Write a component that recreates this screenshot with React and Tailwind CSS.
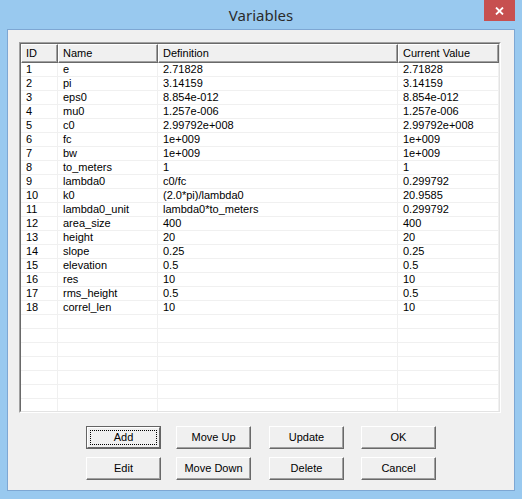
import React from "react";

const rows = [
  ["1", "e", "2.71828", "2.71828"],
  ["2", "pi", "3.14159", "3.14159"],
  ["3", "eps0", "8.854e-012", "8.854e-012"],
  ["4", "mu0", "1.257e-006", "1.257e-006"],
  ["5", "c0", "2.99792e+008", "2.99792e+008"],
  ["6", "fc", "1e+009", "1e+009"],
  ["7", "bw", "1e+009", "1e+009"],
  ["8", "to_meters", "1", "1"],
  ["9", "lambda0", "c0/fc", "0.299792"],
  ["10", "k0", "(2.0*pi)/lambda0", "20.9585"],
  ["11", "lambda0_unit", "lambda0*to_meters", "0.299792"],
  ["12", "area_size", "400", "400"],
  ["13", "height", "20", "20"],
  ["14", "slope", "0.25", "0.25"],
  ["15", "elevation", "0.5", "0.5"],
  ["16", "res", "10", "10"],
  ["17", "rms_height", "0.5", "0.5"],
  ["18", "correl_len", "10", "10"],
];

const filler = Array.from({ length: 7 }, () => ["", "", "", ""]);

const colW = ["w-[37px]", "w-[100px]", "w-[240px]", "w-[101px]"];
const heads = ["ID", "Name", "Definition", "Current Value"];

function Btn({ label, isDefault, className = "" }) {
  if (isDefault) {
    return (
      <div className={`w-[75px] h-[23px] border border-[#646464] ${className}`}>
        <div className="w-full h-full border-t border-l border-white border-r border-b border-r-[#696969] border-b-[#696969] bg-[#f0f0f0] p-[2px]">
          <div className="w-full h-full border border-dotted border-black flex items-center justify-center text-[11px] text-black leading-none">
            {label}
          </div>
        </div>
      </div>
    );
  }
  return (
    <div className={`w-[75px] h-[23px] border-t border-l border-white border-r border-b border-r-[#696969] border-b-[#696969] bg-[#f0f0f0] shadow-[inset_-1px_-1px_0_#a0a0a0] flex items-center justify-center text-[11px] text-black leading-none ${className}`}>
      {label}
    </div>
  );
}

export default function App() {
  return (
    <div
      className="w-[522px] h-[499px] bg-[#99c9ef] flex flex-col overflow-hidden"
      style={{ fontFamily: '"Liberation Sans", Arial, sans-serif' }}
    >
      {/* title bar */}
      <div className="relative h-[29px] shrink-0 flex items-center justify-center">
        <span
          className="text-[15px] text-[#2b2b2b] pt-[1px]"
          style={{ fontFamily: '"Noto Sans", "Open Sans", sans-serif' }}
        >
          Variables
        </span>
        <div className="absolute right-[7px] top-0 w-[31px] h-[21px] bg-[#c75050] flex items-center justify-center">
          <svg width="9" height="8" viewBox="0 0 9 8">
            <path d="M1 0.5 L8 7.5 M8 0.5 L1 7.5" stroke="#fff" strokeWidth="1.8" />
          </svg>
        </div>
      </div>

      {/* client area */}
      <div className="mx-[7px] h-[462px] border border-[#7ea7d3] bg-[#f0f0f0] flex flex-col">
        {/* list view */}
        <div className="ml-[11px] mt-[12px] w-[482px] h-[371px] border-t border-l border-[#a0a0a0] border-r border-b border-r-white border-b-white">
          <div className="w-full h-full border-t border-l border-[#696969] border-r border-b border-r-[#e3e3e3] border-b-[#e3e3e3] bg-white overflow-hidden">
            <div className="flex h-[19px] bg-[#f0f0f0]">
              {heads.map((h, i) => (
                <div
                  key={h}
                  className={`${colW[i]} h-full border-t border-l border-white border-r border-b border-r-[#696969] border-b-[#696969] shadow-[inset_-1px_-1px_0_#a0a0a0] pl-[4px] flex items-center text-[11px] text-black leading-none`}
                >
                  {h}
                </div>
              ))}
            </div>
            {[...rows, ...filler].map((r, ri) => (
              <div key={ri} className="flex h-[14px]">
                {r.map((c, ci) => (
                  <div
                    key={ci}
                    className={`${colW[ci]} h-full border-b border-r border-[#f0f0f0] pl-[5px] flex items-center text-[11px] text-black leading-none whitespace-nowrap`}
                  >
                    {c}
                  </div>
                ))}
              </div>
            ))}
          </div>
        </div>

        {/* buttons */}
        <div className="mt-[13px] flex ml-[78px]">
          <Btn label="Add" isDefault />
          <Btn label="Move Up" className="ml-[15px]" />
          <Btn label="Update" className="ml-[18px]" />
          <Btn label="OK" className="ml-[17px]" />
        </div>
        <div className="mt-[8px] flex ml-[78px]">
          <Btn label="Edit" />
          <Btn label="Move Down" className="ml-[15px]" />
          <Btn label="Delete" className="ml-[18px]" />
          <Btn label="Cancel" className="ml-[17px]" />
        </div>
      </div>
    </div>
  );
}
